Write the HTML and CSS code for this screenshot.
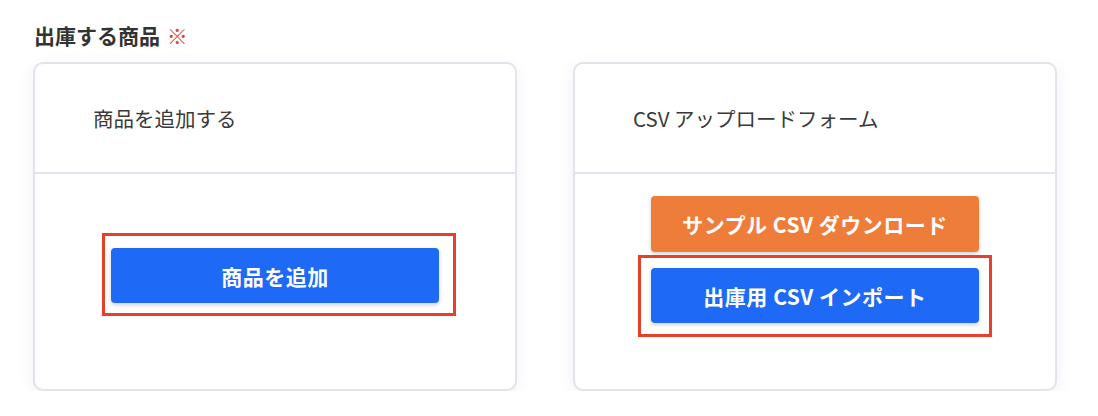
FILE: index.html
```html
<!DOCTYPE html>
<html lang="ja">
<head>
<meta charset="utf-8">
<link rel="stylesheet" href="styles.css">
</head>
<body>
<div class="page">
  <h2 class="title">出庫する商品 <span class="req">※</span></h2>
  <div class="cards">
    <section class="card">
      <div class="card-head">商品を追加する</div>
      <div class="card-body body-add">
        <div class="mark mark-add">
          <button class="btn btn-blue">商品を追加</button>
        </div>
      </div>
    </section>
    <section class="card">
      <div class="card-head">CSV アップロードフォーム</div>
      <div class="card-body body-csv">
        <button class="btn btn-orange">サンプル CSV ダウンロード</button>
        <div class="mark mark-csv">
          <button class="btn btn-blue">出庫用 CSV インポート</button>
        </div>
      </div>
    </section>
  </div>
</div>
</body>
</html>
```

FILE: styles.css
```css
* { box-sizing: border-box; }
html, body { margin: 0; background: #ffffff; }
body {
  font-family: "Noto Sans CJK JP", "Noto Sans", sans-serif;
  color: #333333;
}
.page {
  padding: 21px 0 0 33px;
}
.title {
  margin: 0 0 12px 1px;
  font-size: 21px;
  font-weight: 700;
  line-height: 29px;
  color: #333333;
}
.req {
  color: #e0474c;
  font-weight: 400;
  margin-left: 2px;
}
.cards {
  display: flex;
  gap: 56px;
}
.card {
  width: 484px;
  height: 329px;
  border: 2px solid #e2e4eb;
  border-radius: 10px;
  background: #fff;
  box-shadow: 0 4px 18px rgba(30, 40, 80, 0.06);
  display: flex;
  flex-direction: column;
}
.card-head {
  height: 110px;
  border-bottom: 2px solid #e2e4eb;
  padding-left: 58px;
  display: flex;
  align-items: center;
  font-size: 20.5px;
  color: #3a3a3a;
}
.card-body {
  flex: 1;
  display: flex;
  flex-direction: column;
  align-items: center;
}
.body-add { padding-top: 74px; }
.body-csv { padding-top: 22px; gap: 16px; }
.btn {
  width: 328px;
  height: 55px;
  border: none;
  border-radius: 4px;
  font-family: inherit;
  font-size: 21px;
  font-weight: 700;
  letter-spacing: 0.5px;
  color: #ffffff;
  box-shadow: 0 2px 4px rgba(0, 0, 0, 0.18);
  display: block;
}
.btn-blue { background: #1e69f6; }
.btn-orange { background: #ef7d3a; height: 56px; }
.mark { position: relative; }
.mark::after {
  content: "";
  position: absolute;
  border: 3px solid #e5412a;
  pointer-events: none;
}
.mark-add::after { top: -15px; bottom: -13px; left: -9px; right: -17px; }
.mark-csv::after { top: -13px; bottom: -14px; left: -13px; right: -13px; }
```
